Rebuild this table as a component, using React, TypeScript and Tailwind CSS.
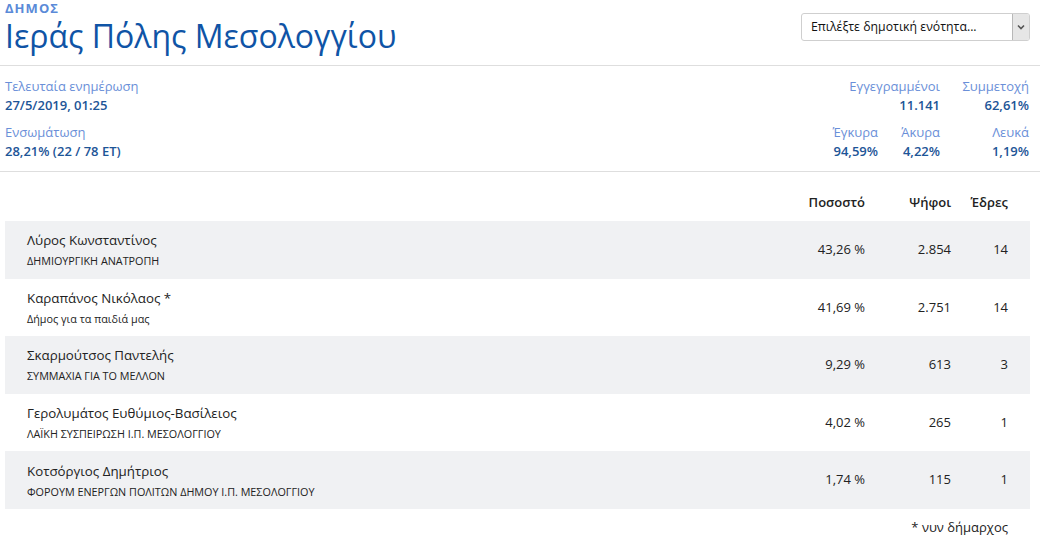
import React from "react";

const candidates = [
  { name: "Λύρος Κωνσταντίνος", party: "ΔΗΜΙΟΥΡΓΙΚΗ ΑΝΑΤΡΟΠΗ", pct: "43,26 %", votes: "2.854", seats: "14" },
  { name: "Καραπάνος Νικόλαος *", party: "Δήμος για τα παιδιά μας", pct: "41,69 %", votes: "2.751", seats: "14" },
  { name: "Σκαρμούτσος Παντελής", party: "ΣΥΜΜΑΧΙΑ ΓΙΑ ΤΟ ΜΕΛΛΟΝ", pct: "9,29 %", votes: "613", seats: "3" },
  { name: "Γερολυμάτος Ευθύμιος-Βασίλειος", party: "ΛΑΪΚΗ ΣΥΣΠΕΙΡΩΣΗ Ι.Π. ΜΕΣΟΛΟΓΓΙΟΥ", pct: "4,02 %", votes: "265", seats: "1" },
  { name: "Κοτσόργιος Δημήτριος", party: "ΦΟΡΟΥΜ ΕΝΕΡΓΩΝ ΠΟΛΙΤΩΝ ΔΗΜΟΥ Ι.Π. ΜΕΣΟΛΟΓΓΙΟΥ", pct: "1,74 %", votes: "115", seats: "1" },
];

const Stat = ({ label, value, w }: { label: string; value: string; w: string }) => (
  <div className={`flex flex-col items-end ${w}`}>
    <span className="text-[13px] leading-[18px] text-[#6a8fd8]">{label}</span>
    <span className="text-[13px] leading-[18px] font-semibold text-[#1d5597] mt-[1px]">{value}</span>
  </div>
);

const App = () => {
  return (
    <div className="w-[1040px] h-[548px] bg-white overflow-hidden font-['Open_Sans',sans-serif]">
      <div className="flex justify-between items-start border-b border-[#dedede] h-[66px] pl-[5px] pr-[10px]">
        <div className="flex flex-col">
          <span className="text-[13px] leading-[15px] font-bold tracking-[0.08em] text-[#5a8ad8] mt-[1px]">ΔΗΜΟΣ</span>
          <h1 className="text-[32px] leading-[34px] text-[#0f54a6] font-medium mt-[3px]">Ιεράς Πόλης Μεσολογγίου</h1>
        </div>
        <div className="mt-[13px] w-[229px] h-[28px] border border-[#cfcfcf] rounded-[3px] flex items-center justify-between pl-[9px]">
          <span className="text-[12.3px] text-[#111]">Επιλέξτε δημοτική ενότητα...</span>
          <div className="w-[17px] h-[26px] bg-[#e6e6e6] border-l border-[#b8b8b8] flex items-center justify-center rounded-r-[2px]">
            <svg width="8" height="6" viewBox="0 0 8 6">
              <path d="M1 1.5 L4 4.5 L7 1.5" stroke="#555" strokeWidth="1.6" fill="none" />
            </svg>
          </div>
        </div>
      </div>

      <div className="flex justify-between border-b border-[#dedede] h-[106px] pl-[5px] pr-[11px] pt-[11px]">
        <div className="flex flex-col">
          <span className="text-[13px] leading-[18px] text-[#6a8fd8]">Τελευταία ενημέρωση</span>
          <span className="text-[13px] leading-[18px] font-semibold text-[#1d5597] mt-[1px]">27/5/2019, 01:25</span>
          <span className="text-[13px] leading-[18px] text-[#6a8fd8] mt-[9px]">Ενσωμάτωση</span>
          <span className="text-[13px] leading-[18px] font-semibold text-[#1d5597] mt-[1px]">28,21% (22 / 78 ET)</span>
        </div>
        <div className="flex flex-col items-end gap-[9px]">
          <div className="flex">
            <Stat label="Εγγεγραμμένοι" value="11.141" w="w-[100px]" />
            <Stat label="Συμμετοχή" value="62,61%" w="w-[89px]" />
          </div>
          <div className="flex">
            <Stat label="Έγκυρα" value="94,59%" w="w-[70px]" />
            <Stat label="Άκυρα" value="4,22%" w="w-[62px]" />
            <Stat label="Λευκά" value="1,19%" w="w-[89px]" />
          </div>
        </div>
      </div>

      <div className="pl-[5px] pr-[10px]">
        <div className="flex items-center h-[49px] pt-[13px] pr-[22px] text-[13px] font-semibold text-[#222]">
          <div className="flex-1" />
          <div className="w-[100px] text-right">Ποσοστό</div>
          <div className="w-[86px] text-right">Ψήφοι</div>
          <div className="w-[57px] text-right">Έδρες</div>
        </div>
        {candidates.map((c, i) => (
          <div
            key={c.name}
            className={`flex items-center h-[57.6px] pl-[22px] pr-[22px] ${i % 2 === 0 ? "bg-[#f0f1f3]" : "bg-white"}`}
          >
            <div className="flex-1 flex flex-col">
              <span className="text-[13.3px] leading-[20px] text-[#222]">{c.name}</span>
              <span className="text-[10.8px] leading-[16px] text-[#222] mt-[3px]">{c.party}</span>
            </div>
            <div className="w-[100px] text-right text-[13px] text-[#222]">{c.pct}</div>
            <div className="w-[86px] text-right text-[13px] text-[#222]">{c.votes}</div>
            <div className="w-[57px] text-right text-[13px] text-[#222]">{c.seats}</div>
          </div>
        ))}
        <div className="flex justify-end pr-[22px] pt-[9px] text-[13px] text-[#222]">* νυν δήμαρχος</div>
      </div>
    </div>
  );
};

export default App;
